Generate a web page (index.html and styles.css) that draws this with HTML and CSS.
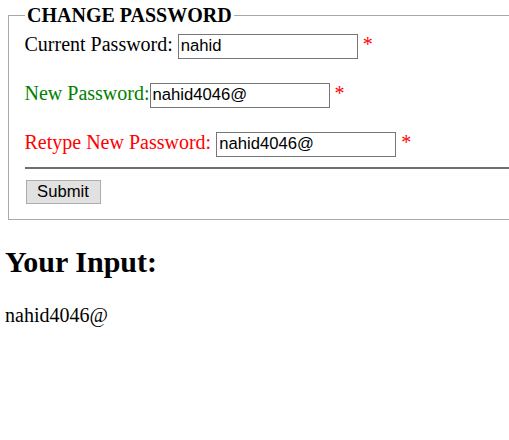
FILE: index.html
```html
<!DOCTYPE html>
<html>
<head>
<meta charset="utf-8">
<title>Change Password</title>
<link rel="stylesheet" href="styles.css">
</head>
<body>
<form class="form">
  <fieldset class="box">
    <legend class="legend">CHANGE PASSWORD</legend>
    <div class="row">
      <label class="label">Current Password: </label><input class="field" type="text" value="nahid"> <span class="req">*</span>
    </div>
    <div class="row">
      <label class="label label-green">New Password:</label><input class="field" type="text" value="nahid4046@"> <span class="req">*</span>
    </div>
    <div class="row row-last">
      <label class="label label-red">Retype New Password: </label><input class="field" type="text" value="nahid4046@"> <span class="req">*</span>
    </div>
    <hr class="rule">
    <button class="submit" type="button">Submit</button>
  </fieldset>
</form>
<h2 class="title">Your Input:</h2>
<p class="output">nahid4046@</p>
</body>
</html>
```
FILE: styles.css
```css
html {
  overflow: hidden;
}
body {
  margin: 4px 0 5px 5px;
  font-family: "Liberation Serif", "Times New Roman", serif;
  font-size: 20px;
  color: #000;
  background: #fff;
}
.form {
  margin: 0;
}
.box {
  box-sizing: border-box;
  width: calc(100% - 2.5px);
  min-width: 0;
  margin: 0 0 0 2.5px;
  border: 1px solid #a9a9a9;
  border-right: 0;
  padding: 6px 0 15px 16px;
}
.legend {
  font-weight: bold;
  font-size: 20px;
  padding: 0 2.5px;
}
.row {
  height: 29px;
  margin-bottom: 20px;
  white-space: nowrap;
}
.row-last {
  height: 26px;
  margin-bottom: 0;
}
.label-green {
  color: #008000;
}
.label-red {
  color: #ff0000;
}
.field {
  box-sizing: border-box;
  width: 180px;
  height: 25px;
  margin: 0;
  padding: 1px 2px;
  border: 1px solid #767676;
  font-family: "Liberation Sans", Arial, sans-serif;
  font-size: 16.67px;
  color: #000;
  background: #fff;
}
.req {
  color: #ff0000;
}
.rule {
  margin: 10px 0;
  border: 0;
  border-top: 2px solid #6e6e6e;
  height: 0;
}
.submit {
  box-sizing: border-box;
  width: 75px;
  height: 24px;
  margin: 1px 0 0 1px;
  padding: 0 7px;
  border: 1px solid #adadad;
  background: #e1e1e1;
  font-family: "Liberation Sans", Arial, sans-serif;
  font-size: 16.67px;
  color: #000;
  vertical-align: top;
}
.title {
  font-size: 30px;
  font-weight: bold;
  margin: 25px 0;
}
.output {
  margin: 25px 0;
}
```
